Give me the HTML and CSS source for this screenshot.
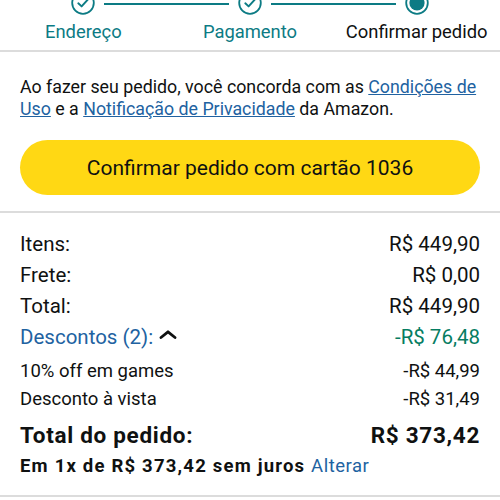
FILE: index.html
```html
<!DOCTYPE html>
<html lang="pt-BR">
<head>
<meta charset="utf-8">
<link rel="stylesheet" href="styles.css">
</head>
<body>
<div class="stepper">
  <div class="step done">
    <div class="track">
      <span class="line line-right"></span>
      <svg class="dot" viewBox="0 0 24 24" width="24" height="24"><circle cx="12" cy="12" r="10.8" fill="#fff" stroke="#0c7b84" stroke-width="1.8"/><path d="M7.3 12.3 L10.6 15.4 L16.6 8.8" fill="none" stroke="#0c7b84" stroke-width="1.9" stroke-linecap="round" stroke-linejoin="round"/></svg>
    </div>
    <div class="label">Endereço</div>
  </div>
  <div class="step done">
    <div class="track">
      <span class="line line-left"></span>
      <span class="line line-right"></span>
      <svg class="dot" viewBox="0 0 24 24" width="24" height="24"><circle cx="12" cy="12" r="10.8" fill="#fff" stroke="#0c7b84" stroke-width="1.8"/><path d="M7.3 12.3 L10.6 15.4 L16.6 8.8" fill="none" stroke="#0c7b84" stroke-width="1.9" stroke-linecap="round" stroke-linejoin="round"/></svg>
    </div>
    <div class="label">Pagamento</div>
  </div>
  <div class="step current">
    <div class="track">
      <span class="line line-left"></span>
      <svg class="dot" viewBox="0 0 24 24" width="24" height="24"><circle cx="12" cy="12" r="10.8" fill="#fff" stroke="#0c7b84" stroke-width="1.8"/><circle cx="12" cy="12" r="7.6" fill="#0c7b84"/></svg>
    </div>
    <div class="label">Confirmar pedido</div>
  </div>
</div>

<main class="content">
  <p class="terms">Ao fazer seu pedido, você concorda com as <a href="#">Condições de Uso</a> e a <a href="#">Notificação de Privacidade</a> da Amazon.</p>
  <button class="place-order">Confirmar pedido com cartão 1036</button>
</main>

<section class="summary">
  <div class="row"><span>Itens:</span><span>R$ 449,90</span></div>
  <div class="row"><span>Frete:</span><span>R$ 0,00</span></div>
  <div class="row"><span>Total:</span><span>R$ 449,90</span></div>
  <div class="row discounts">
    <span class="disc-label">Descontos (2): <svg class="chev" viewBox="0 0 18 9" width="18" height="9"><path d="M2 7.5 L9 1.8 L16 7.5" fill="none" stroke="#0f1111" stroke-width="2.8" stroke-linecap="round" stroke-linejoin="round"/></svg></span>
    <span class="green">-R$ 76,48</span>
  </div>
  <div class="row sub first-sub"><span>10% off em games</span><span>-R$ 44,99</span></div>
  <div class="row sub"><span>Desconto à vista</span><span>-R$ 31,49</span></div>
  <div class="row grand"><span>Total do pedido:</span><span>R$ 373,42</span></div>
  <div class="installment">Em 1x de R$ 373,42 sem juros <a href="#">Alterar</a></div>
</section>
</body>
</html>
```

FILE: styles.css
```css
* { box-sizing: border-box; }
html, body { margin: 0; padding: 0; background: #fff; }
body {
  font-family: "Roboto", "Liberation Sans", sans-serif;
  color: #0f1111;
  width: 500px;
  overflow: hidden;
}
a { color: #2162a1; }

.stepper {
  display: grid;
  grid-template-columns: 1fr 1fr 1fr;
  margin-top: -9px;
  height: 61px;
  border-bottom: 2px solid #dcdcdc;
}
.step { display: flex; flex-direction: column; align-items: center; }
.track {
  position: relative;
  width: 100%;
  height: 24px;
  display: flex;
  justify-content: center;
}
.line {
  position: absolute;
  top: 12px;
  height: 2px;
  background: #0c7b84;
}
.line-right { left: calc(50% + 21px); right: -42px; }
.line-left { right: calc(50% + 21px); left: -42px; }
.dot { position: relative; display: block; }
.label {
  margin-top: 6px;
  font-size: 18.4px;
  line-height: 22px;
  color: #0c7b84;
}
.current .label { color: #0f1111; }

.content { padding: 24px 20px 16px; }
.terms {
  margin: 0;
  font-size: 17.8px;
  line-height: 22px;
}
.place-order {
  display: block;
  width: 100%;
  height: 55px;
  margin-top: 20px;
  border: 0;
  border-radius: 28px;
  background: #ffd814;
  color: #0f1111;
  font-family: inherit;
  font-size: 21px;
}

.summary {
  border-top: 2px solid #dcdcdc;
  border-bottom: 2px solid #dcdcdc;
  padding: 16px 20px 14px;
}
.row {
  display: flex;
  justify-content: space-between;
  align-items: center;
  font-size: 20.5px;
  line-height: 31px;
}
.discounts { color: #2162a1; }
.disc-label { display: flex; align-items: center; gap: 6px; }
.chev { display: block; margin-top: -6px; }
.green { color: #067d62; }
.row.sub { font-size: 18.5px; line-height: 28px; }
.row.first-sub { margin-top: 4px; }
.row.grand {
  margin-top: 6px;
  font-size: 22.5px;
  line-height: 32px;
  font-weight: 700;
  letter-spacing: 0.7px;
}
.installment {
  font-size: 18.5px;
  line-height: 30px;
  font-weight: 700;
  letter-spacing: 1.2px;
}
.installment a { font-weight: 400; text-decoration: none; letter-spacing: 0.5px; }
```
